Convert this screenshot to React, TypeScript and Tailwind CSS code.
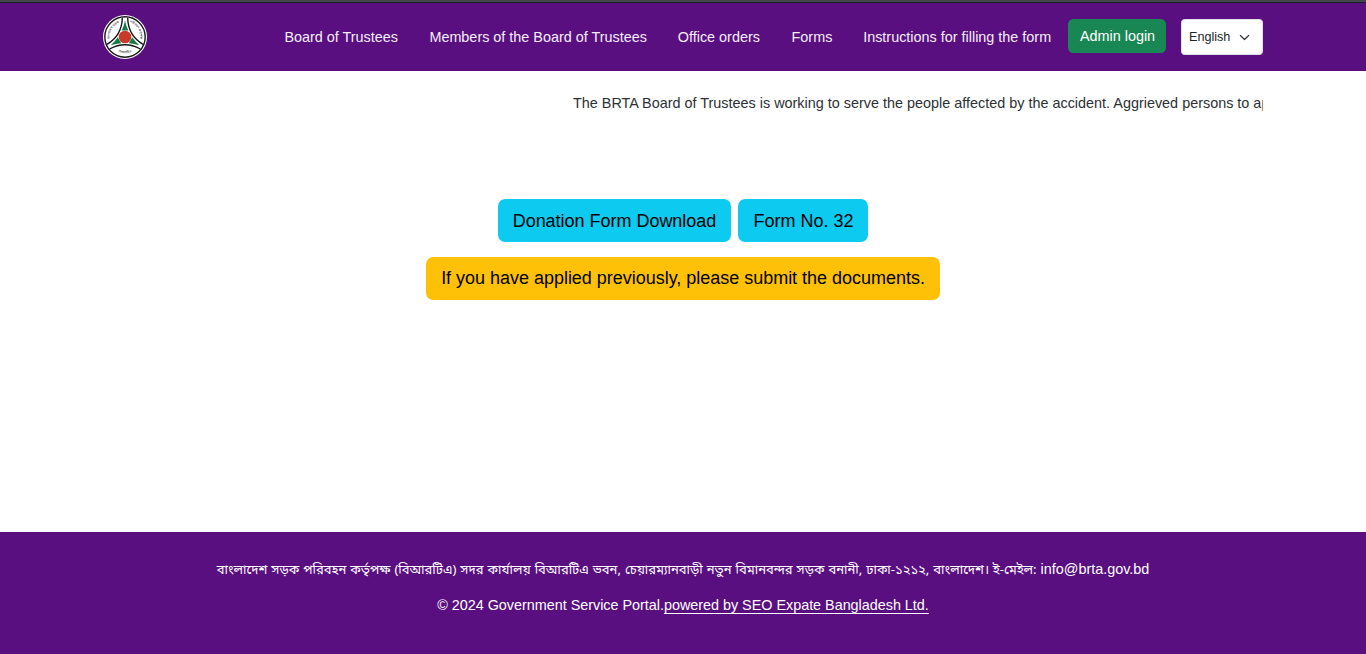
import React from "react";

const links: { label: string; width: string }[] = [
  { label: "Board of Trustees", width: "w-[145px]" },
  { label: "Members of the Board of Trustees", width: "w-[248.4px]" },
  { label: "Office orders", width: "w-[113.8px]" },
  { label: "Forms", width: "w-[71.6px]" },
  { label: "Instructions for filling the form", width: "w-[200px]" },
];

function Logo() {
  return (
    <svg viewBox="0 0 44 44" className="h-11 w-11 shrink-0" role="img" aria-label="BRTA">
      <circle cx="22" cy="22" r="22" fill="#fff" />
      <circle cx="22" cy="22" r="20.2" fill="#fff" stroke="#171717" strokeWidth="1.4" />
      <defs>
        <path id="ringLeft" d="M6.8 24 A15.3 15.3 0 0 1 17.5 7.4" />
        <path id="ringRight" d="M26.5 7.4 A15.3 15.3 0 0 1 37.2 24" />
        <path id="ringBottom" d="M12 36.2 Q22 40.2 32 36.2" />
      </defs>
      {[0, 120, 240].map((angle) => (
        <g key={angle} transform={`rotate(${angle} 22 22)`}>
          <path d="M6.6 34 Q22 25.4 37.4 34" fill="none" stroke="#171717" strokeWidth="1.4" />
          <path d="M22 5.5 Q23 11 25.4 15.6 L18.6 15.6 Q21 11 22 5.5 Z" fill="#16794a" />
        </g>
      ))}
      <circle cx="22" cy="22" r="6.3" fill="#c93a2b" />
      <g fill="#222" fontSize="3.2" fontFamily="Noto Sans Bengali, Noto Sans, sans-serif">
        <text><textPath href="#ringLeft">বাংলাদেশ সড়ক</textPath></text>
        <text><textPath href="#ringRight">পরিবহন কর্তৃপক্ষ</textPath></text>
        <text><textPath href="#ringBottom" startOffset="18%">বিআরটিএ</textPath></text>
      </g>
    </svg>
  );
}

function Header() {
  return (
    <header className="h-[71px] border-t-2 border-[#42464b] bg-[#5a0f80] text-white">
      <div className="h-px bg-[#1d2327]" />
      <div className="mx-auto flex w-[1160px] items-start">
        <div className="pt-3">
          <Logo />
        </div>
        <nav className="ml-[137.4px] flex pt-6 whitespace-nowrap text-[#f4eef7]">
          {links.map(({ label, width }) => (
            <a key={label} href="#" className={width}>
              {label}
            </a>
          ))}
        </nav>
        <a
          href="#"
          className="mt-4 ml-auto flex h-[34px] w-[98px] items-center justify-center rounded-[5.4px] bg-[#198754] pt-0.5 pl-px whitespace-nowrap"
        >
          Admin login
        </a>
        <button className="mt-4 ml-[15px] flex h-9 w-[82px] items-center rounded-[3.6px] border border-[#dee2e6] bg-white pl-[7px] text-[12.6px] text-[#212529]">
          <span className="pt-0.5">English</span>
          <svg viewBox="0 0 16 16" className="ml-[9px] h-[11px] w-[11px]" fill="none" stroke="#343a40" strokeWidth="1.8" strokeLinecap="round" strokeLinejoin="round">
            <path d="m2 5 6 6 6-6" />
          </svg>
        </button>
      </div>
    </header>
  );
}

export default function App() {
  return (
    <div className="flex h-[654px] flex-col overflow-hidden bg-white font-['Liberation_Sans',Arial,sans-serif] text-[14.4px] leading-[21.6px]">
      <Header />
      <main className="mx-auto w-[1160px] flex-1">
        <div className="h-[43px] overflow-hidden pt-[22px] pl-[470px] tracking-[0.004px] whitespace-nowrap text-[#2c3034]">
          The BRTA Board of Trustees is working to serve the people affected by the accident. Aggrieved persons to apply
        </div>
        <div className="mt-[85px] flex flex-col items-center gap-[15px] text-[18px] leading-[27px] tracking-[-0.02px] text-black">
          <div className="flex gap-[7px]">
            <a href="#" className="flex h-[43px] w-[233px] items-center justify-center rounded-[7.2px] bg-[#0dcaf0] pt-0.5">
              Donation Form Download
            </a>
            <a href="#" className="flex h-[43px] w-[130px] items-center justify-center rounded-[7.2px] bg-[#0dcaf0] pt-0.5 pl-px">
              Form No. 32
            </a>
          </div>
          <a href="#" className="flex h-[43px] w-[514px] items-center justify-center rounded-[7.2px] bg-[#ffc107]">
            If you have applied previously, please submit the documents.
          </a>
        </div>
      </main>
      <footer className="flex h-[122px] flex-col items-center gap-[13.4px] bg-[#5a0f80] pt-[27px] whitespace-nowrap text-white">
        <p>
          <span className="font-['Noto_Sans_Bengali','Noto_Sans',sans-serif] text-[13px] [word-spacing:0.65px]">
            বাংলাদেশ সড়ক পরিবহন কর্তৃপক্ষ (বিআরটিএ) সদর কার্যালয় বিআরটিএ ভবন, চেয়ারম্যানবাড়ী নতুন বিমানবন্দর সড়ক বনানী, ঢাকা-১২১২, বাংলাদেশ। ই-মেইল:
          </span>{" "}
          info@brta.gov.bd
        </p>
        <p className="tracking-[-0.02px]">
          © 2024 Government Service Portal.
          <a href="#" className="underline decoration-1 underline-offset-[3px]">powered by SEO Expate Bangladesh Ltd.</a>
        </p>
      </footer>
    </div>
  );
}
